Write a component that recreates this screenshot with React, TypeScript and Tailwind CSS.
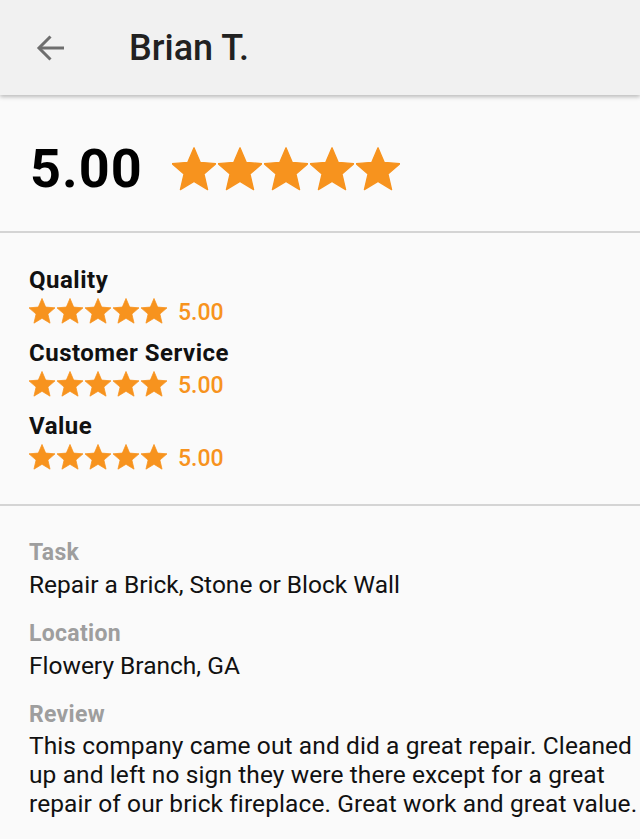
import React from "react";

const Star = ({ size }: { size: number }) => (
  <svg width={size} height={size} viewBox="2 2 20 19.3" fill="#f7931e" stroke="#f7931e" strokeWidth="0.6" strokeLinejoin="round">
    <path d="M12 17.27L18.18 21l-1.64-7.03L22 9.24l-7.19-.61L12 2 9.19 8.63 2 9.24l5.46 4.73L5.82 21z" />
  </svg>
);

const SubRating = ({ label }: { label: string }) => (
  <div className="flex flex-col">
    <div className="text-[24px] leading-[28px] font-bold text-[#111] tracking-[0.5px]">{label}</div>
    <div className="flex items-center h-[33px]">
      <div className="flex gap-[2px]">
        {[0, 1, 2, 3, 4].map((i) => (
          <Star key={i} size={26} />
        ))}
      </div>
      <span className="ml-[11px] mt-[6px] text-[23px] font-medium text-[#f7931e]">5.00</span>
    </div>
  </div>
);

const Label = ({ children }: { children: React.ReactNode }) => (
  <div className="text-[23px] leading-[33px] font-bold text-[#9e9e9e] tracking-[0.3px]">{children}</div>
);

export default function App() {
  return (
    <div className="w-[640px] h-[839px] overflow-hidden bg-[#fafafa]" style={{ fontFamily: "Roboto, 'Noto Sans', sans-serif" }}>
      <div className="h-[95px] bg-[#f1f1f1] flex items-center shadow-[0_2px_4px_rgba(0,0,0,0.25)] relative z-10">
        <svg className="ml-[35px]" width="30" height="30" viewBox="0 0 30 30" fill="none" stroke="#6e6e6e" strokeWidth="3" strokeLinecap="butt" strokeLinejoin="miter">
          <path d="M29 15H4" />
          <path d="M15.5 3.5L4 15l11.5 11.5" />
        </svg>
        <div className="ml-[64px] text-[36px] font-medium text-[#212121]">Brian T.</div>
      </div>
      <div className="h-[138px] pt-[12px] flex items-center px-[30px] border-b-2 border-[#d4d4d4]">
        <span className="text-[54px] font-bold text-black leading-none tracking-[1px]">5.00</span>
        <div className="ml-[29px] flex gap-[2px]">
          {[0, 1, 2, 3, 4].map((i) => (
            <Star key={i} size={44} />
          ))}
        </div>
      </div>
      <div className="px-[29px] pt-[33px] pb-[31px] border-b-2 border-[#d4d4d4] flex flex-col gap-[12px]">
        <SubRating label="Quality" />
        <SubRating label="Customer Service" />
        <SubRating label="Value" />
      </div>
      <div className="pl-[29px] pr-[2px] pt-[30px] flex flex-col">
        <Label>Task</Label>
        <div className="text-[24.5px] leading-[32px] text-[#111] mb-[16px]">Repair a Brick, Stone or Block Wall</div>
        <Label>Location</Label>
        <div className="text-[24.5px] leading-[32px] text-[#111] mb-[16px]">Flowery Branch, GA</div>
        <Label>Review</Label>
        <div className="text-[24.5px] leading-[29px] text-[#111] tracking-[0.1px]">
          This company came out and did a great repair. Cleaned up and left no sign they were there except for a great repair of our brick fireplace. Great work and great value.
        </div>
      </div>
    </div>
  );
}
